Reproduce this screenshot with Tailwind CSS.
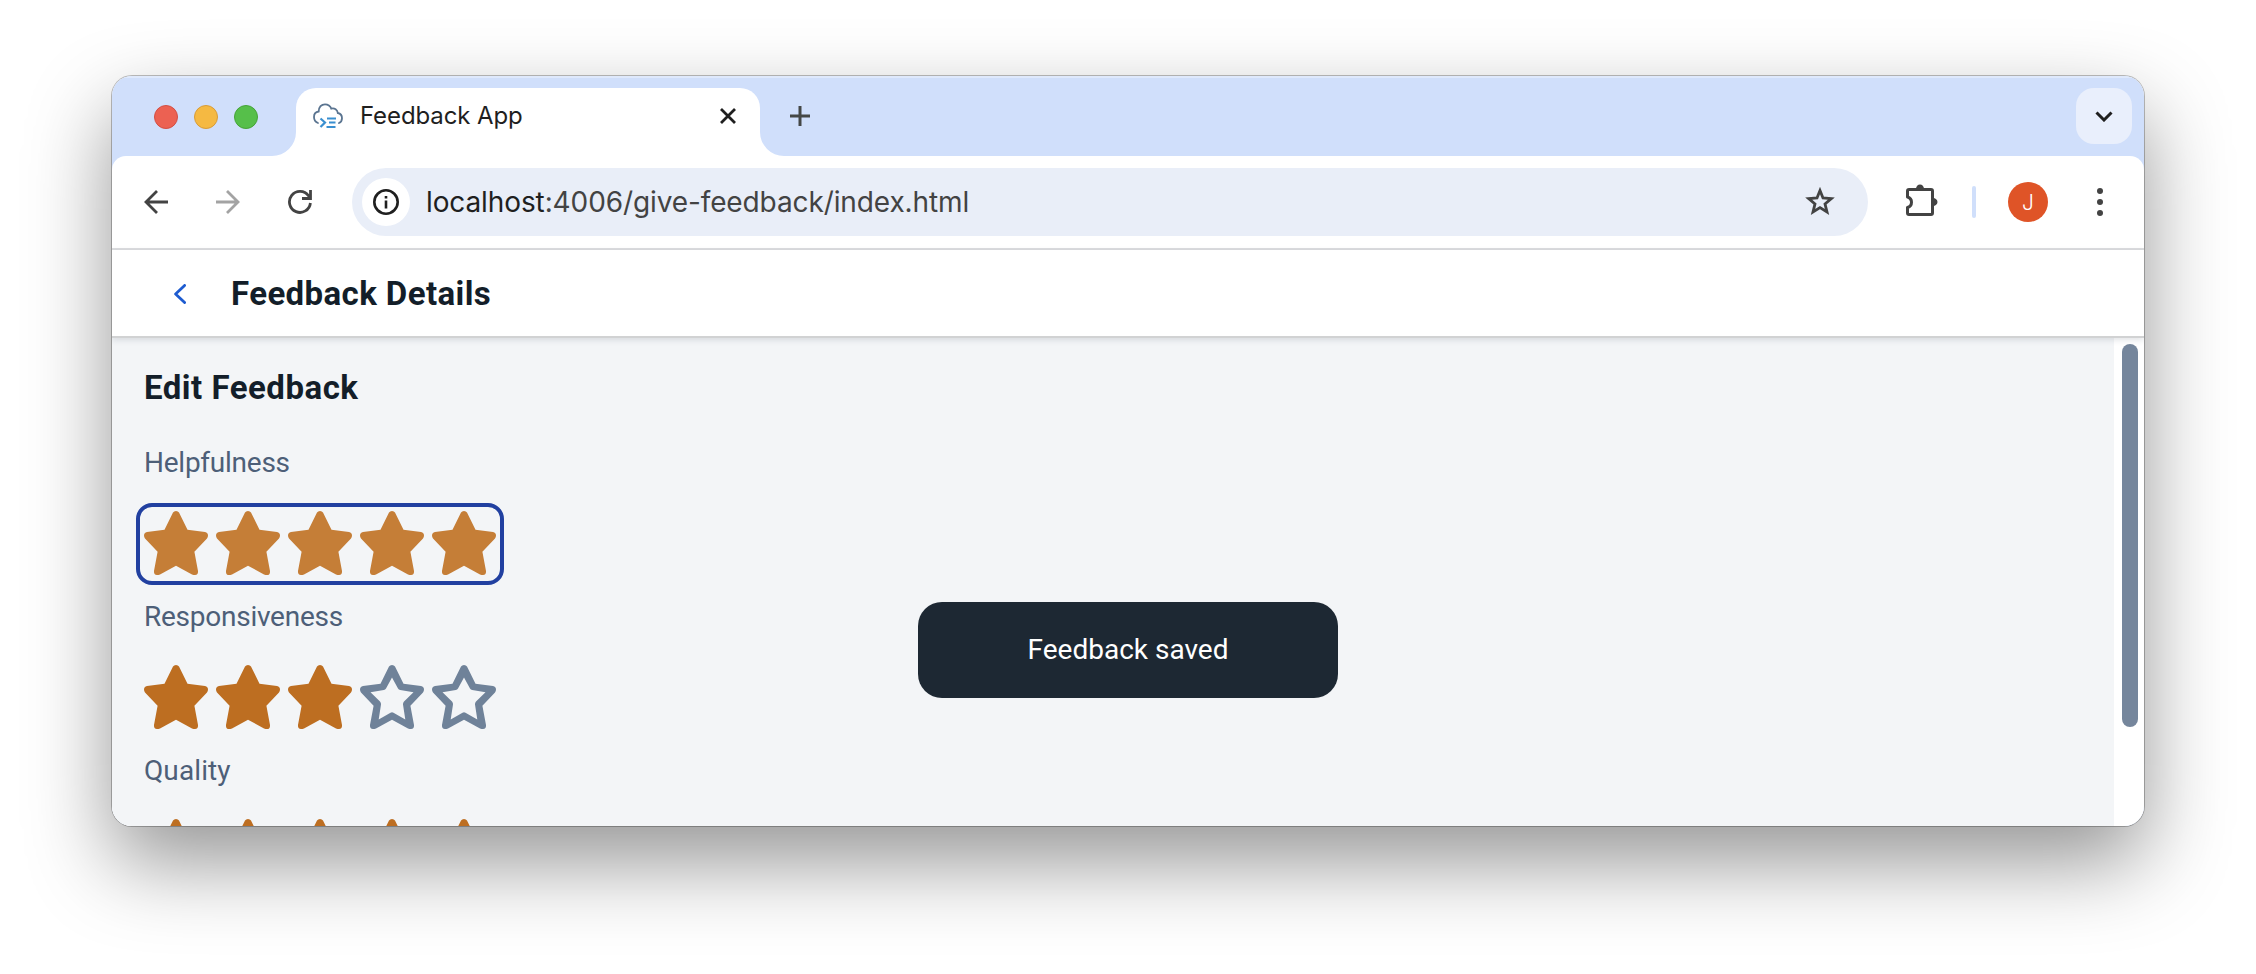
<!DOCTYPE html>
<html lang="en">
<head>
<meta charset="utf-8">
<title>Feedback App</title>
<script src="https://cdn.jsdelivr.net/npm/@tailwindcss/browser@4"></script>
</head>
<body class="h-[974px] w-[2256px] overflow-hidden bg-white px-[112px] pt-[76px]">
<svg class="hidden">
  <symbol id="star" viewBox="0 0 64 64"><path fill="currentColor" d="M29 1.5Q30 0 32 0T35 1.5L43.5 18.7L61 21Q64 21.500 64 24.500Q64 26 63 27.500L50.400 40.700L54 60Q54.300 64 51 64Q49.500 64 48 63.500L32 54.700L16 63.500Q14.500 64 13 64Q9.700 64 10 60L13.600 40.700L1 27.500Q0 26 0 24.500Q0 21.500 3 21L20.500 18.700Z"/></symbol>
  <symbol id="star-open" viewBox="0 0 64 64"><path fill="currentColor" fill-rule="evenodd" d="M29 1.500Q30 0 32 0T35 1.500L43.500 18.700L61 21Q64 21.500 64 24.500Q64 26 63 27.500L50.400 40.700L54 60Q54.300 64 51 64Q49.500 64 48 63.500L32 54.700L16 63.500Q14.500 64 13 64Q9.700 64 10 60L13.600 40.700L1 27.500Q0 26 0 24.500Q0 21.500 3 21L20.500 18.700ZM32 12.500L26 23.500Q25.300 24.900 23.800 25.100L10.500 27.300L20 36.500Q21.200 37.900 21 39.500L18.700 54.500L30.500 47.700Q32 46.700 33.500 47.700L45.300 54.500L43 39.500Q42.800 37.900 44 36.500L53.500 27.300L40.200 25.100Q38.700 24.900 38 23.500Z"/></symbol>
</svg>

<div class="relative flex h-[750px] w-[2032px] flex-col rounded-[20px] shadow-[0_0_0_1px_rgba(0,0,0,0.25),0_36px_84px_rgba(0,0,0,0.42)]">
<div class="flex min-h-0 flex-1 flex-col overflow-hidden rounded-[20px] bg-[#d0dffb]">

  <!-- Tab strip -->
  <div class="flex h-20 shrink-0 border-t-2 border-[#dfe9fc] pt-[10px] pr-3">
    <div class="flex gap-4 pt-[17px] pl-[42px]">
      <div class="size-6 rounded-full border border-[#d34f44] bg-[#ec6152]"></div>
      <div class="size-6 rounded-full border border-[#d89c38] bg-[#f5b942]"></div>
      <div class="size-6 rounded-full border border-[#46a338] bg-[#56bf4a]"></div>
    </div>
    <svg class="mt-11 ml-[14px] h-6 w-6 shrink-0" viewBox="0 0 24 24"><path fill="#fff" d="M24 0V24H0A24 24 0 0 0 24 0Z"/></svg>
    <div class="flex h-[68px] w-[464px] items-start rounded-t-[20px] bg-white pt-2 pr-4">
      <svg class="mt-[7px] ml-[17px] h-[26px] w-[30px]" viewBox="0 0 30 26" fill="none" stroke-width="1.800" stroke-linecap="round">
        <path stroke="#5a7490" d="M5 20C2.500 19 1 16.500 1 14C1 11 3 8.800 5.700 8.500C5.700 4 8.500 1.300 12 1.300C15 1.300 17.300 3 18.300 5.600C21.500 4.600 24.500 6.800 24.800 10C27.500 10.500 29 12.800 29 15.200C29 17.500 27.700 19.200 26 20"/>
        <path stroke="#3a8fd0" stroke-width="2.200" stroke-linecap="butt" d="M7.500 15.500L12 19.500L7.500 24M14 15.500H23M16 19.500H22.500M13.500 24H22.500"/>
      </svg>
      <span class="mt-[5px] ml-[17px] text-[24px]/[30px] tracking-[-0.1px] whitespace-nowrap text-[#1f1f1f] [font-family:Inter,sans-serif]">Feedback App</span>
      <svg class="mt-3 mr-2 ml-auto size-4" viewBox="0 0 16 16" fill="none" stroke="#1f1f1f" stroke-width="2.800"><path d="M1 1L15 15M15 1L1 15"/></svg>
    </div>
    <svg class="mt-11 h-6 w-6 shrink-0" viewBox="0 0 24 24"><path fill="#fff" d="M0 0V24H24A24 24 0 0 1 0 0Z"/></svg>
    <svg class="mt-[18px] ml-[6px] size-5" viewBox="0 0 20 20" fill="none" stroke="#444746" stroke-width="3"><path d="M10 0V20M0 10H20"/></svg>
    <div class="ml-auto flex size-14 items-center justify-center rounded-[18px] bg-[#e9effc]">
      <svg class="h-[11px] w-[18px]" viewBox="0 0 18 11" fill="none" stroke="#1f1f1f" stroke-width="3"><path d="M1.500 1.500L9 9L16.500 1.500"/></svg>
    </div>
  </div>

  <!-- Toolbar -->
  <div class="flex h-[94px] shrink-0 items-center rounded-t-[14px] border-b-2 border-[#dcdddf] bg-white pl-8 text-[#434343]">
    <svg class="size-6" viewBox="0 0 24 24" fill="none" stroke="currentColor" stroke-width="2.800"><path d="M24 12H2M13 1L2 12L13 23"/></svg>
    <svg class="ml-12 size-6 text-[#a3a3a3]" viewBox="0 0 24 24" fill="none" stroke="currentColor" stroke-width="2.800"><path d="M0 12H22M11 1L22 12L11 23"/></svg>
    <svg class="ml-12 size-6" viewBox="0 0 24 24" fill="none" stroke="currentColor" stroke-width="2.800"><path d="M22.400 13A10.500 10.500 0 1 1 20.500 5.800L22 8M22.500 0V8.500H14"/></svg>
    <div class="ml-10 flex h-[68px] w-[1516px] items-center rounded-full bg-[#e9eef8] pr-8 pl-[10px]">
      <div class="flex size-12 items-center justify-center rounded-full bg-white">
        <svg class="size-[26px]" viewBox="0 0 26 26" fill="none" stroke="#1f1f1f" stroke-width="2.600"><circle cx="13" cy="13" r="11.700"/><path d="M13 11.500V19.500M13 7V9.600"/></svg>
      </div>
      <span class="ml-4 text-[28px]/[36px] tracking-[-0.11px] whitespace-nowrap text-[#434343] [font-family:Inter,sans-serif]"><span class="text-[#1f1f1f]">localhost</span>:4006/give-feedback/index.html</span>
      <svg class="ml-auto size-8" viewBox="0 0 32 32" fill="none" stroke="currentColor" stroke-width="2.800" stroke-miterlimit="10"><path d="M16 4.500L19 12L27.300 12.600L21 17.900L23 26L16 21.600L9 26L11 17.900L4.700 12.600L13 12Z"/></svg>
    </div>
    <svg class="mb-1 ml-[38px] size-8" viewBox="0 0 32 32"><path fill="none" stroke="currentColor" stroke-width="3" stroke-linejoin="round" d="M1.500 13V7Q1.500 5.500 3 5.500H25Q26.500 5.500 26.500 7V29Q26.500 30.500 25 30.500H3Q1.500 30.500 1.500 29V23.500Q5.500 22.200 5.500 18.200T1.500 13Z"/><path fill="currentColor" d="M10 5A4 4.500 0 0 1 18 5ZM27 14A4.500 4 0 0 1 27 22Z"/></svg>
    <div class="ml-[34px] h-8 w-1 rounded-full bg-[#d0dffb]"></div>
    <div class="ml-8 flex size-10 items-center justify-center rounded-full bg-[#df5427] pt-px text-[21px]/[24px] font-light text-white [font-family:Inter,sans-serif]">J</div>
    <svg class="ml-[49px] h-[30px] w-[6px]" viewBox="0 0 6 30" fill="currentColor"><circle cx="3" cy="4" r="3"/><circle cx="3" cy="15" r="3"/><circle cx="3" cy="26" r="3"/></svg>
  </div>

  <!-- App header -->
  <div class="relative flex h-[88px] shrink-0 items-center border-b-2 border-[#d1d2d3] bg-white pt-[2px] pl-[62px] shadow-[0_2px_6px_rgba(34,53,72,0.14)]">
    <svg class="h-5 w-3" viewBox="0 0 12 20" fill="none" stroke="#1d5bd0" stroke-width="2.800" stroke-linecap="round" stroke-linejoin="round"><path d="M10.600 1.400L1.600 10L10.600 18.600"/></svg>
    <h1 class="ml-[45px] text-[33px]/[40px] font-bold tracking-[0.4px] whitespace-nowrap text-[#131e29] [font-family:Roboto,sans-serif]">Feedback Details</h1>
  </div>

  <!-- Content -->
  <div class="flex min-h-0 flex-1 bg-white [font-family:Roboto,sans-serif]">
    <main class="flex w-[2002px] flex-col items-start overflow-hidden bg-[#f3f5f7] pl-6">
      <h2 class="mt-[30px] ml-2 text-[33px]/[40px] font-bold tracking-[0.5px] whitespace-nowrap text-[#131e29]">Edit Feedback</h2>
      <div class="mt-[37px] ml-2 text-[28px]/[36px] tracking-[-0.25px] text-[#4d5f78]">Helpfulness</div>
      <div class="mt-[22px] flex h-[82px] w-[368px] shrink-0 gap-2 rounded-[16px] border-4 border-[#2140a0] px-1 pt-1 text-[#c57e37]">
        <svg class="size-16"><use href="#star"/></svg><svg class="size-16"><use href="#star"/></svg><svg class="size-16"><use href="#star"/></svg><svg class="size-16"><use href="#star"/></svg><svg class="size-16"><use href="#star"/></svg>
      </div>
      <div class="mt-[14px] ml-2 text-[28px]/[36px] tracking-[-0.25px] text-[#4d5f78]">Responsiveness</div>
      <div class="mt-[30px] ml-2 flex shrink-0 gap-2 text-[#bd6e21]">
        <svg class="size-16"><use href="#star"/></svg><svg class="size-16"><use href="#star"/></svg><svg class="size-16"><use href="#star"/></svg><svg class="size-16 text-[#6f8299]"><use href="#star-open"/></svg><svg class="size-16 text-[#6f8299]"><use href="#star-open"/></svg>
      </div>
      <div class="mt-[24px] ml-2 text-[28px]/[36px] tracking-[0.1px] text-[#4d5f78]">Quality</div>
      <div class="mt-[30px] ml-2 flex shrink-0 gap-2 text-[#bd6e21]">
        <svg class="size-16"><use href="#star"/></svg><svg class="size-16"><use href="#star"/></svg><svg class="size-16"><use href="#star"/></svg><svg class="size-16"><use href="#star"/></svg><svg class="size-16"><use href="#star"/></svg>
      </div>
    </main>
    <div class="w-[30px] pt-[6px] pl-2"><div class="h-[383px] w-4 rounded-full bg-[#75869c]"></div></div>
  </div>
</div>

<!-- Toast -->
<div class="absolute top-[526px] left-[806px] flex h-24 w-[420px] items-center justify-center rounded-[24px] bg-[#1d2833] text-[28px]/[36px] text-white [font-family:Roboto,sans-serif]">Feedback saved</div>
</div>
</body>
</html>
